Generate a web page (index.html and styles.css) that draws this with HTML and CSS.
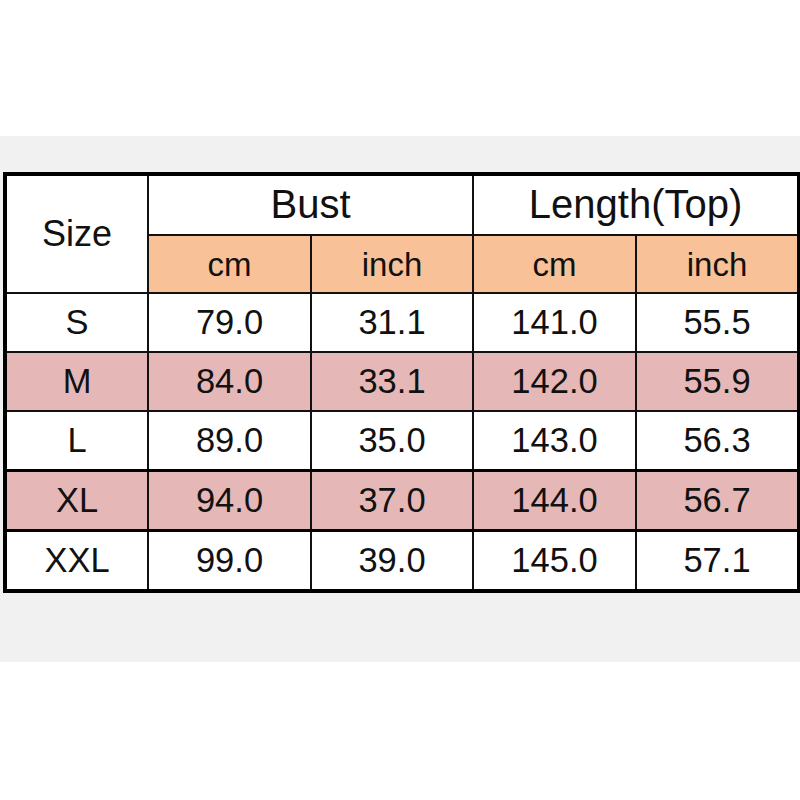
FILE: index.html
```html
<!DOCTYPE html>
<html>
<head>
<meta charset="utf-8">
<link rel="stylesheet" href="styles.css">
</head>
<body>
<div class="top"></div>
<div class="band">
  <table class="chart">
    <colgroup>
      <col class="c1"><col class="c2"><col class="c3"><col class="c4"><col class="c5">
    </colgroup>
    <tr class="h1">
      <td rowspan="2" class="size">Size</td>
      <td colspan="2" class="group">Bust</td>
      <td colspan="2" class="group">Length(Top)</td>
    </tr>
    <tr class="h2">
      <td>cm</td><td>inch</td><td>cm</td><td>inch</td>
    </tr>
    <tr class="row"><td>S</td><td>79.0</td><td>31.1</td><td>141.0</td><td>55.5</td></tr>
    <tr class="row pink"><td>M</td><td>84.0</td><td>33.1</td><td>142.0</td><td>55.9</td></tr>
    <tr class="row"><td>L</td><td>89.0</td><td>35.0</td><td>143.0</td><td>56.3</td></tr>
    <tr class="row pink xl"><td>XL</td><td>94.0</td><td>37.0</td><td>144.0</td><td>56.7</td></tr>
    <tr class="row"><td>XXL</td><td>99.0</td><td>39.0</td><td>145.0</td><td>57.1</td></tr>
  </table>
</div>
</body>
</html>
```
FILE: styles.css
```css
html, body {
  margin: 0;
  padding: 0;
  background: #ffffff;
  font-family: "Liberation Sans", Arial, sans-serif;
  color: #111;
}
.top {
  height: 136px;
}
.band {
  background: #f1f1f1;
  padding: 36px 0 72px 3px;
  height: 418px;
}
.chart {
  border-collapse: collapse;
  table-layout: fixed;
  width: 794px;
  background: #fff;
  border: 4px solid #000;
}
.c1 { width: 143px; }
.c2 { width: 163px; }
.c3 { width: 162px; }
.c4 { width: 163px; }
.c5 { width: 163px; }
.chart td {
  border: 2px solid #111;
  text-align: center;
  vertical-align: middle;
  padding: 0;
  height: 57px;
  font-size: 34.5px;
  line-height: 1;
}
.h1 td, .h2 td {
  height: 56px;
}
.chart .group {
  font-size: 40px;
  padding-bottom: 2px;
}
.chart .size {
  font-size: 36px;
}
.h2 td {
  background: #f8c197;
  font-size: 33px;
}
.pink td {
  background: #e5b8b7;
}
.xl td {
  border-top: 3px solid #000;
  border-bottom: 3px solid #000;
}
```
